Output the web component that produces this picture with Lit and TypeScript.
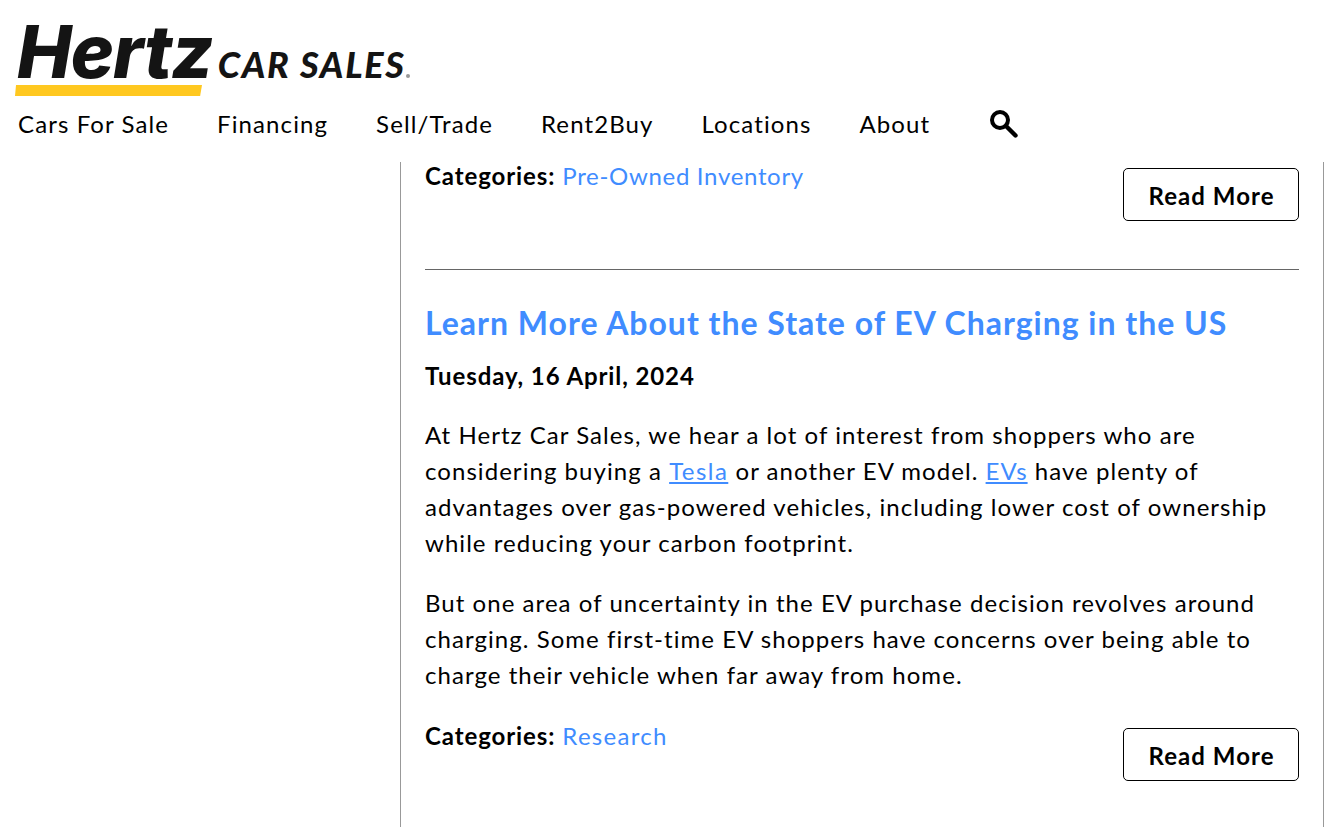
import { LitElement, html, css } from "lit";
import { customElement } from "lit/decorators.js";

@customElement("app-root")
export class AppRoot extends LitElement {
  static styles = css`
    :host { display: block; height: 827px; overflow: hidden; background: #fff; color: #000; font-family: "Lato", "Open Sans", sans-serif; font-size: 24px; letter-spacing: 1.05px; }
    header { height: 162px; box-sizing: border-box; padding: 0 0 0 15px; display: flex; flex-direction: column; }
    .logo { height: 98px; display: flex; flex-direction: column; align-items: flex-start; padding-top: 21px; box-sizing: border-box; }
    .wordmark { display: flex; align-items: baseline; height: 62px; font-weight: 900; font-style: italic; color: #141414; letter-spacing: 0; padding-left: 2px; }
    .hertz { font-family: "Inter", sans-serif; font-weight: 800; font-size: 73px; line-height: 62px; letter-spacing: -1px; }
    .sales { font-family: "Lato", sans-serif; font-size: 36px; line-height: 62px; margin-left: 5px; letter-spacing: 1.7px; }
    .reg { width: 4px; height: 4px; border-radius: 50%; background: #999; margin-left: 0; }
    .bar { width: 187px; height: 11px; margin-top: 2px; background: #ffc820; clip-path: polygon(0 100%, 1px 0, 100% 0, 99% 100%); }
    nav { display: flex; align-items: center; gap: 48px; height: 52px; padding-left: 3px; letter-spacing: 1.1px; }
    nav a { line-height: 52px; }
    nav svg { margin-left: 12px; display: block; }
    main { display: grid; grid-template-columns: 401px 1fr; height: 665px; }
    .side { border-right: 1px solid #999; }
    .content { border-right: 1px solid #999; margin-right: 1px; padding: 0 24px; }
    .meta { display: flex; justify-content: space-between; align-items: flex-start; }
    .cats { line-height: 27px; letter-spacing: 0.9px; }
    .tight { letter-spacing: 0.68px; }
    .wide { letter-spacing: 1.3px; }
    b { font-weight: 700; }
    .link { color: #408cff; }
    a.u { color: #408cff; text-decoration: underline; }
    .tesla { letter-spacing: 1.45px; }
    .btn { margin-top: 6px; width: 176px; height: 53px; box-sizing: border-box; border: 1px solid #000; border-radius: 5px; padding: 1px 0 0 1px; display: flex; align-items: center; justify-content: center; font-weight: 700; }
    hr { border: 0; height: 1px; background: #666; margin: 48px 0 33px; }
    h2 { margin: 0; font-size: 32px; line-height: 39px; font-weight: 700; color: #408cff; letter-spacing: 0.99px; }
    .date { margin: 16px 0 23px; line-height: 36px; font-weight: 700; letter-spacing: 0.9px; }
    p { margin: 0 0 24px; line-height: 36px; }
    .last { margin-top: 29px; }
  `;
  render() {
    return html`
      <header>
        <div class="logo">
          <div class="wordmark"><span class="hertz">Hertz</span><span class="sales">CAR SALES</span><span class="reg"></span></div>
          <div class="bar"></div>
        </div>
        <nav>
          <a>Cars For Sale</a><a>Financing</a><a>Sell/Trade</a><a>Rent2Buy</a><a>Locations</a><a>About</a>
          <svg width="28" height="28" viewBox="0 0 28 28" fill="none" stroke="#000" stroke-linecap="round"><circle cx="10" cy="10" r="8" stroke-width="4"/><path d="M16 16l9.5 9.5" stroke-width="4.4"/></svg>
        </nav>
      </header>
      <main>
        <div class="side"></div>
        <div class="content">
          <div class="meta">
            <div class="cats"><b>Categories:</b> <span class="link tight">Pre-Owned Inventory</span></div>
            <div class="btn">Read More</div>
          </div>
          <hr />
          <h2>Learn More About the State of EV Charging in the US</h2>
          <div class="date">Tuesday, 16 April, 2024</div>
          <p>At Hertz Car Sales, we hear a lot of interest from shoppers who are considering buying a <a class="u tesla">Tesla</a> or another EV model. <a class="u">EVs</a> have plenty of advantages over gas-powered vehicles, including lower cost of ownership while reducing your carbon footprint.</p>
          <p>But one area of uncertainty in the EV purchase decision revolves around charging. Some first-time EV shoppers have concerns over being able to charge their vehicle when far away from home.</p>
          <div class="meta last">
            <div class="cats"><b>Categories:</b> <span class="link wide">Research</span></div>
            <div class="btn">Read More</div>
          </div>
        </div>
      </main>
    `;
  }
}
